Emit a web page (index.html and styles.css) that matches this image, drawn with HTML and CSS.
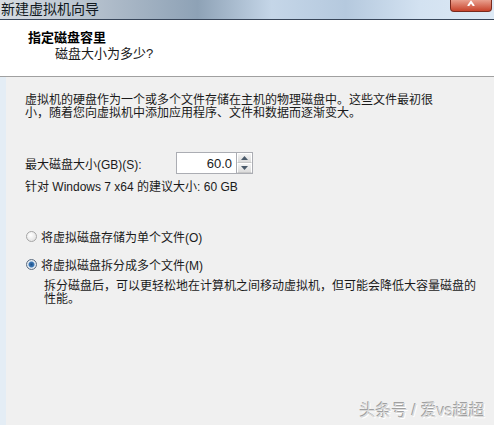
FILE: index.html
```html
<!DOCTYPE html>
<html lang="zh-CN">
<head>
  <meta charset="UTF-8" />
  <title>新建虚拟机向导</title>
  <link rel="stylesheet" href="styles.css">
</head>
<body>
  <div class="window">
    <div class="titlebar">
      <span class="title">新建虚拟机向导</span>
      <div class="close">
        <svg width="10" height="6" viewBox="0 0 10 6"><path d="M2 6 L5 2 L8 6" stroke="#fff" stroke-width="2" fill="none"/></svg>
      </div>
    </div>
    <div class="header">
      <div class="head-title">指定磁盘容里</div>
      <div class="head-sub">磁盘大小为多少?</div>
    </div>
    <div class="body">
      <p class="intro">虚拟机的硬盘作为一个或多个文件存储在主机的物理磁盘中。这些文件最初很<br>小，随着您向虚拟机中添加应用程序、文件和数据而逐渐变大。</p>
      <div class="size-row">
        <span class="size-label">最大磁盘大小(GB)(S):</span>
        <div class="spin">
          <div class="spin-value">60.0</div>
          <div class="spin-btns">
            <div class="spin-btn">
              <svg width="7" height="4" viewBox="0 0 7 4"><path d="M0 4 L3.5 0 L7 4 Z" fill="#4a5a6a"/></svg>
            </div>
            <div class="spin-btn">
              <svg width="7" height="4" viewBox="0 0 7 4"><path d="M0 0 L3.5 4 L7 0 Z" fill="#4a5a6a"/></svg>
            </div>
          </div>
        </div>
      </div>
      <div class="hint">针对 Windows 7 x64 的建议大小: 60 GB</div>
      <div class="options">
        <label class="radio-row">
          <span class="radio"></span>
          <span>将虚拟磁盘存储为单个文件(O)</span>
        </label>
        <label class="radio-row">
          <span class="radio checked"></span>
          <span>将虚拟磁盘拆分成多个文件(M)</span>
        </label>
        <p class="radio-desc">拆分磁盘后，可以更轻松地在计算机之间移动虚拟机，但可能会降低大容量磁盘的<br>性能。</p>
      </div>
    </div>
    <div class="watermark">头条号 / 爱vs超超</div>
  </div>
</body>
</html>
```

FILE: styles.css
```css
body {
  margin: 0;
  padding: 0;
  background: #f0f0f0;
  font-family: "Liberation Sans", "Noto Sans CJK SC", sans-serif;
  font-size: 12px;
  color: #1a1a1a;
}
.window {
  position: relative;
  width: 494px;
  height: 425px;
  overflow: hidden;
  background: #f0f0f0;
  display: flex;
  flex-direction: column;
}
.titlebar {
  height: 19px;
  flex-shrink: 0;
  display: flex;
  align-items: flex-start;
  justify-content: space-between;
  background: linear-gradient(to right, #d8dde3 0%, #a9b7c6 25%, #8ea2b6 40%, #c5d6e8 55%, #b5c9de 70%, #d3e2f1 85%, #dde9f5 100%);
  border-bottom: 1px solid #38465a;
}
.title {
  font-size: 14px;
  line-height: 18px;
  color: #101820;
  padding-left: 1px;
}
.close {
  width: 40px;
  height: 11px;
  margin-right: 2px;
  background: linear-gradient(#e9a08e, #c8432b);
  border: 1px solid #7a2a1e;
  border-top: none;
  border-radius: 0 0 4px 4px;
  display: flex;
  justify-content: center;
  align-items: flex-start;
}
.header {
  height: 57px;
  flex-shrink: 0;
  background: #fff;
  border-bottom: 1px solid #a0a0a0;
  padding-left: 28px;
  box-sizing: border-box;
  padding-top: 10px;
}
.head-title {
  font-weight: bold;
  font-size: 13px;
  line-height: 16px;
  color: #000;
}
.head-sub {
  padding-left: 27px;
  font-size: 13px;
  line-height: 16px;
  color: #1a1a1a;
}
.body {
  flex: 1;
  border-left: 6px solid #e4edf5;
  padding: 17px 0 0 19px;
}
.intro {
  margin: 0;
  line-height: 13px;
}
.size-row {
  display: flex;
  align-items: center;
  margin-top: 32px;
}
.size-label {
  width: 151px;
}
.spin {
  display: flex;
  height: 22px;
}
.spin-value {
  width: 55px;
  background: #fff;
  border: 1px solid #abadb3;
  border-right: none;
  text-align: right;
  padding-right: 4px;
  font-size: 13px;
  line-height: 22px;
}
.spin-btns {
  display: flex;
  flex-direction: column;
  border: 1px solid #abadb3;
  width: 15px;
}
.spin-btn {
  flex: 1;
  display: flex;
  align-items: center;
  justify-content: center;
  background: linear-gradient(#f4f4f4, #dcdcdc);
  border: 1px solid #fff;
  border-bottom-color: #c8c8c8;
}
.hint {
  margin-top: 6px;
  line-height: 15px;
}
.options {
  margin-top: 34px;
  padding-left: 1px;
}
.radio-row {
  display: flex;
  align-items: center;
  gap: 4px;
  height: 15px;
  margin-bottom: 13px;
}
.radio {
  width: 11px;
  height: 11px;
  border-radius: 50%;
  border: 1px solid #a6a6a6;
  background: radial-gradient(circle at 40% 35%, #fff, #dcdcdc);
  box-sizing: border-box;
}
.radio.checked {
  border-color: #5d6d80;
  background: radial-gradient(circle, #1f4f86 0, #3b79b8 2.5px, #e8eef5 3.5px, #c9d3de 6px);
}
.radio-desc {
  margin: -5px 0 0 18px;
  line-height: 13px;
}
.watermark {
  position: absolute;
  right: 9px;
  bottom: 4px;
  font-size: 16px;
  color: #dadada;
  text-shadow: -1px -1px 0 #a0a0a0, 1px 1px 0 #fff;
}
```
